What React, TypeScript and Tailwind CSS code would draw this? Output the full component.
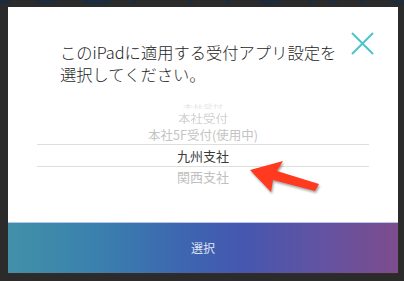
const jp = "font-['Noto_Sans_CJK_JP','Noto_Sans',sans-serif]";

const wheel = [
  { label: "本社5F受付(使用中)", cls: "h-[17px] text-[12.5px] text-[#c4c4c4]" },
];

export default function App() {
  return (
    <div className={`w-[404px] h-[281px] bg-[#2b2b2b] overflow-hidden flex flex-col ${jp}`}>
      {/* background screen peeking over the modal */}
      <div className="h-[7px] overflow-hidden flex justify-center">
        <span className="-mt-[40px] text-[52px] leading-none tracking-[14px] font-light text-[#1d2c3c] font-['Liberation_Sans',sans-serif]">
          RECEPTIONIST
        </span>
      </div>

      {/* modal */}
      <div className="mx-[8px] w-[390px] h-[266px] bg-white flex flex-col relative">
        <div className="flex-1 flex flex-col">
          <p className="pt-[34px] pl-[52px] text-[16.3px] leading-[22px] font-light text-[#1e1e1e]">
            このiPadに適用する受付アプリ設定を
            <br />
            選択してください。
          </p>

          {/* picker wheel */}
          <div className="mt-[11px] flex flex-col items-center text-center">
            <div className="h-[14px] w-full overflow-hidden flex justify-center items-end">
              <span className="text-[10px] leading-[8px] text-[#e4e4e4] scale-y-50">本社受付</span>
            </div>
            <div className="h-[17px] flex items-center text-[12.5px] text-[#cfcfcf] scale-y-90">本社受付</div>
            {wheel.map((w) => (
              <div key={w.label} className={`flex items-center ${w.cls}`}>
                {w.label}
              </div>
            ))}
            <div className="self-stretch mx-[29px] h-[23px] border-y border-[#dedede] flex items-center justify-center text-[13px] text-[#3a3a3a]">
              九州支社
            </div>
            <div className="h-[20px] flex items-center text-[13px] text-[#c0c0c0]">関西支社</div>
          </div>
        </div>

        {/* close */}
        <svg className="absolute left-[343px] top-[25px]" width="23" height="23" viewBox="0 0 23 23">
          <path d="M1 1 L22 22 M22 1 L1 22" stroke="#4cc4c9" strokeWidth="2" fill="none" />
        </svg>

        {/* annotation arrow */}
        <svg
          className="absolute left-[230px] top-[147px] drop-shadow-[1px_2px_1px_rgba(0,0,0,0.35)]"
          width="90"
          height="48"
          viewBox="0 0 90 48"
        >
          <polygon
            points="12,16 45,7 39,17 81,30 77,37 35,26 33,38"
            fill="#ff3a1e"
          />
        </svg>

        <div className="h-[51px] border-t border-[#b9c4e6] bg-[linear-gradient(90deg,#4190a8_0%,#3a7fae_24%,#3d66b0_45%,#4557b0_60%,#6552a0_82%,#7d4d8d_100%)] flex items-center justify-center">
          <span className="text-[12px] text-[#dfe4f4]">選択</span>
        </div>
      </div>
      <div className="mx-[8px] h-[1px] bg-[#3a2a22]" />
    </div>
  );
}
